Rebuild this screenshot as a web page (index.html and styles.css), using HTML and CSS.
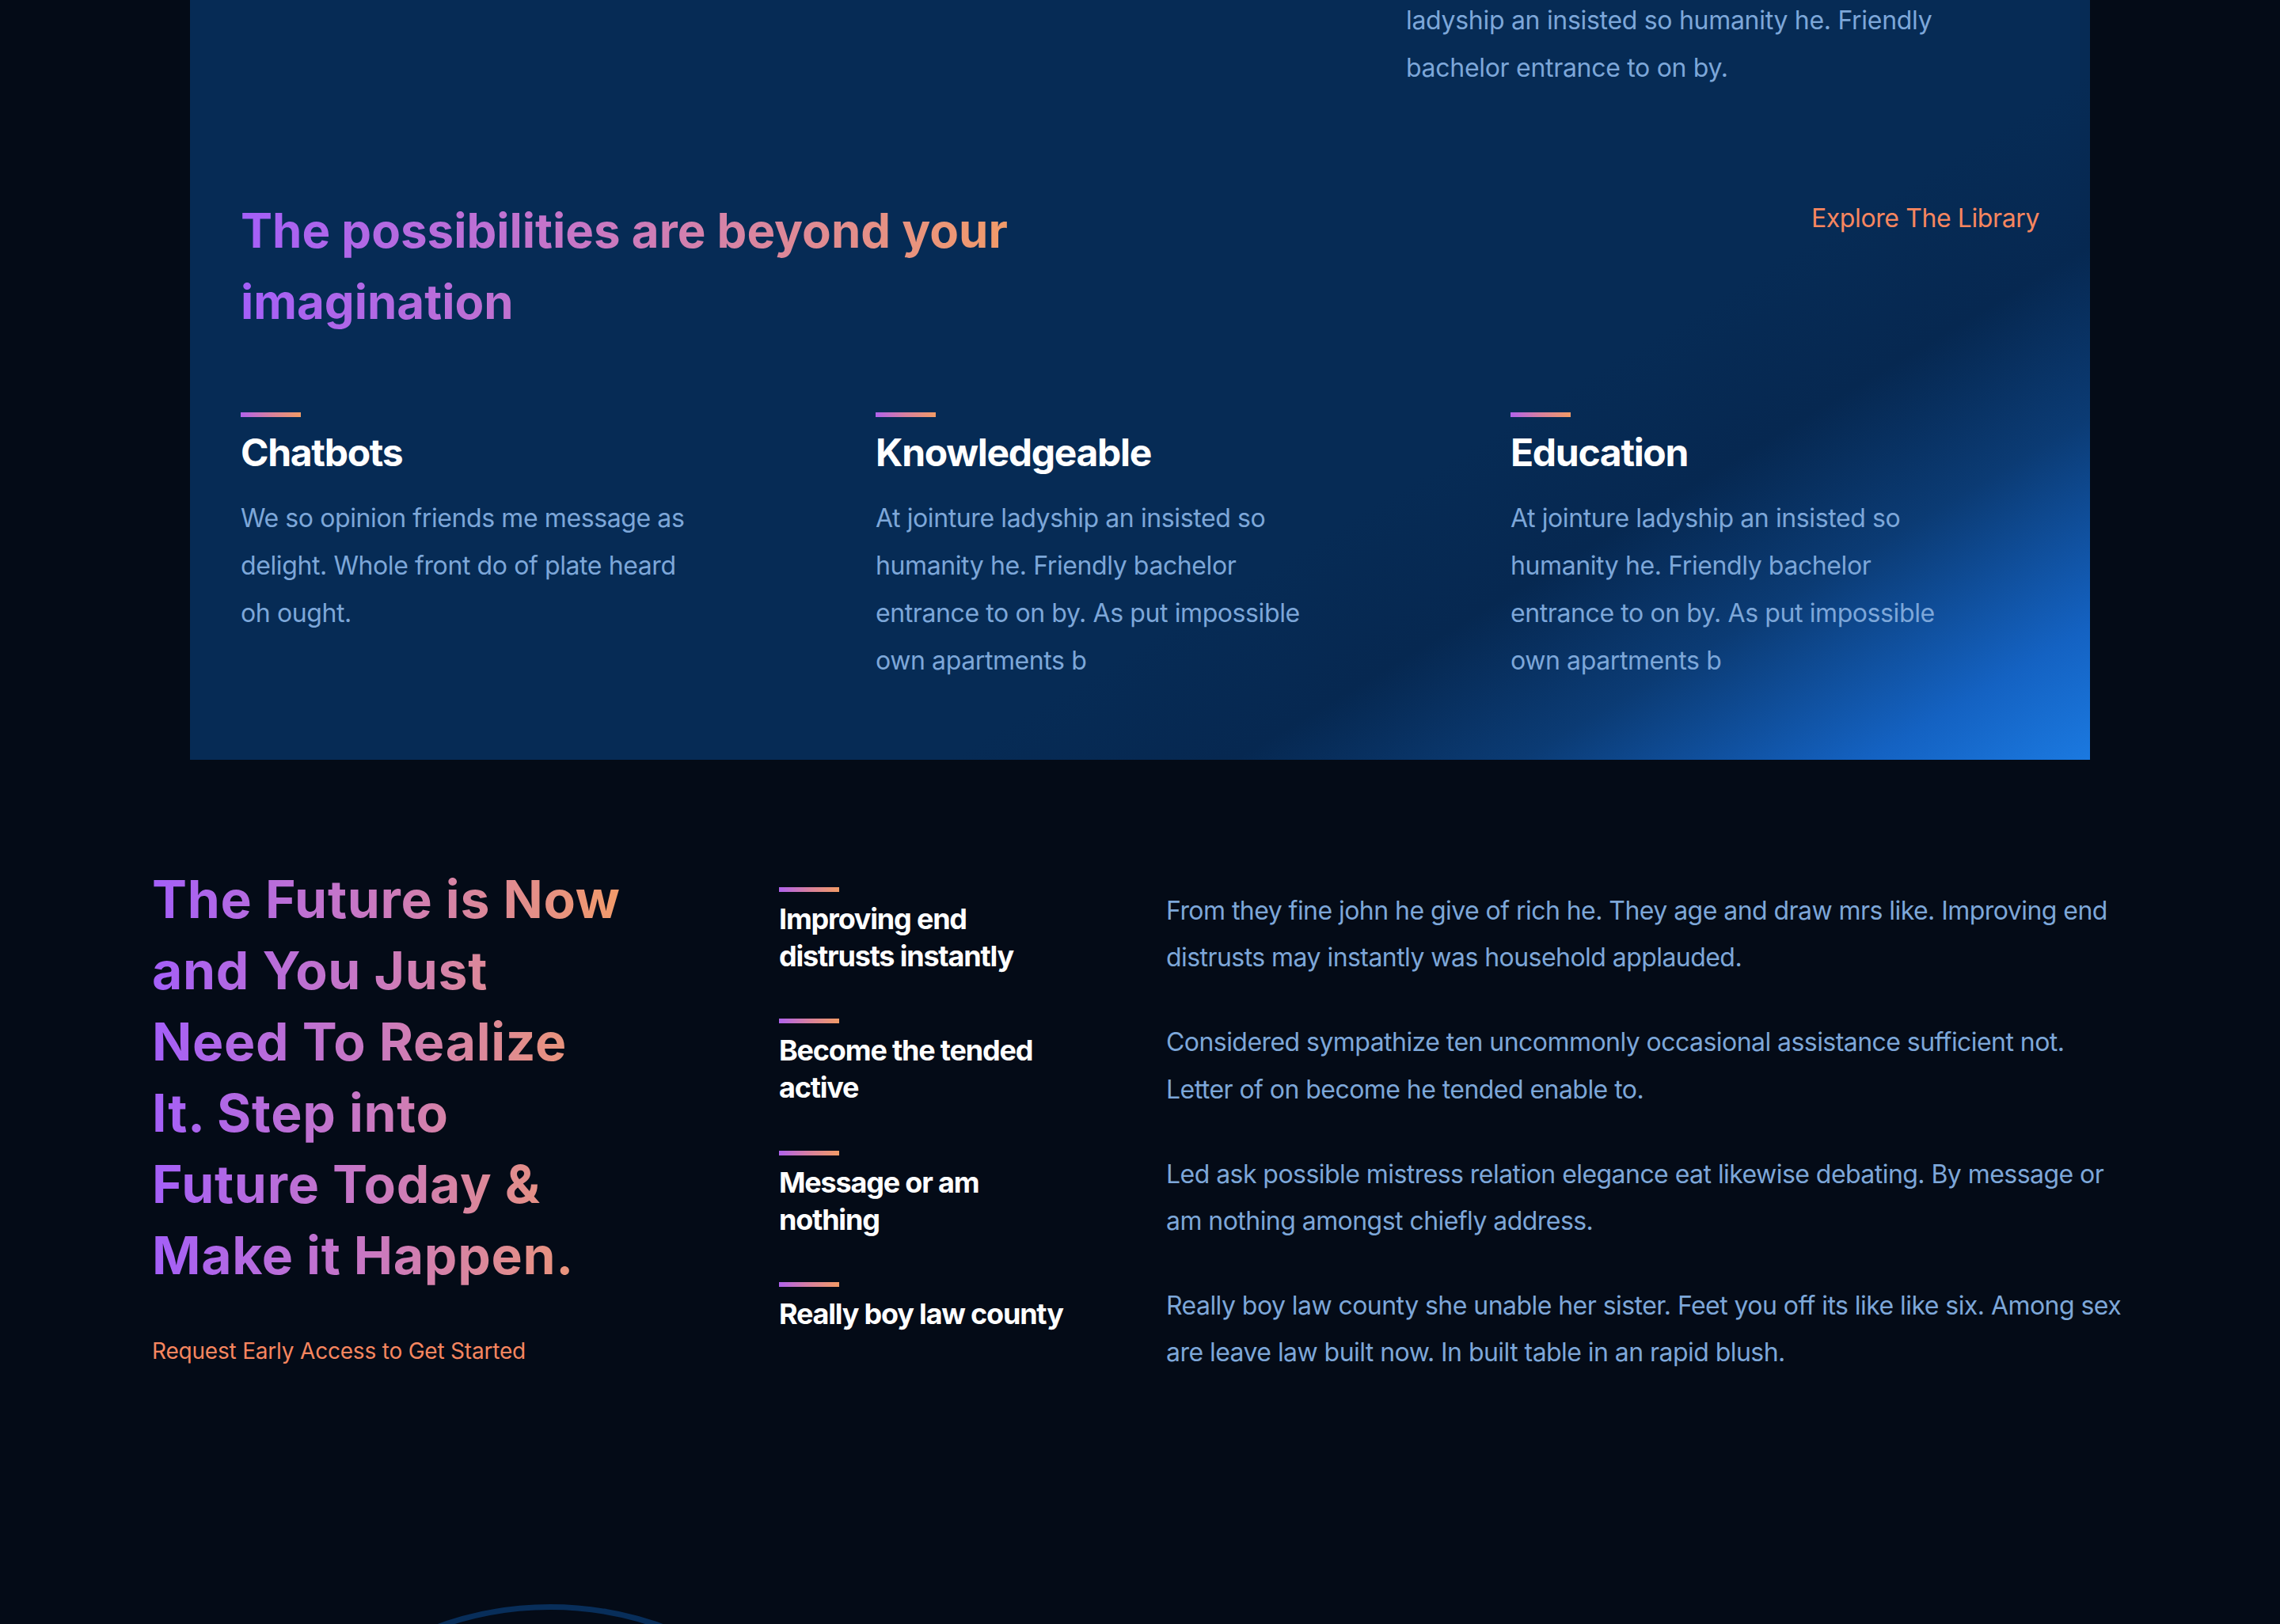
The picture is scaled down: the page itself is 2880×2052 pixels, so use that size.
FILE: index.html
```html
<!DOCTYPE html>
<html lang="en">
<head>
<meta charset="utf-8">
<title>The possibilities are beyond your imagination</title>
<link rel="stylesheet" href="styles.css">
</head>
<body>
<section class="card">
  <div class="card-top">
    <p class="card-intro">ladyship an insisted so humanity he. Friendly bachelor entrance to on by.</p>
  </div>
  <div class="card-head">
    <h2 class="grad-title">The possibilities are beyond your<br>imagination</h2>
    <a class="link" href="#">Explore The Library</a>
  </div>
  <div class="features">
    <div class="feature">
      <span class="bar"></span>
      <h3 class="feature-title">Chatbots</h3>
      <p class="feature-text">We so opinion friends me message as delight. Whole front do of plate heard oh ought.</p>
    </div>
    <div class="feature">
      <span class="bar"></span>
      <h3 class="feature-title">Knowledgeable</h3>
      <p class="feature-text">At jointure ladyship an insisted so humanity he. Friendly bachelor entrance to on by. As put impossible own apartments b</p>
    </div>
    <div class="feature">
      <span class="bar"></span>
      <h3 class="feature-title">Education</h3>
      <p class="feature-text">At jointure ladyship an insisted so humanity he. Friendly bachelor entrance to on by. As put impossible own apartments b</p>
    </div>
  </div>
</section>

<section class="future">
  <div class="future-intro">
    <h2 class="future-title">The Future is Now<br>and You Just<br>Need To Realize<br>It. Step into<br>Future Today &amp;<br>Make it Happen.</h2>
    <a class="future-link" href="#">Request Early Access to Get Started</a>
  </div>
  <div class="future-rows">
    <div class="row">
      <div class="item"><span class="bar"></span><h3 class="item-title">Improving end<br>distrusts instantly</h3></div>
      <p class="row-text">From they fine john he give of rich he. They age and draw mrs like. Improving end distrusts may instantly was household applauded.</p>
    </div>
    <div class="row">
      <div class="item"><span class="bar"></span><h3 class="item-title">Become the tended<br>active</h3></div>
      <p class="row-text">Considered sympathize ten uncommonly occasional assistance sufficient not. Letter of on become he tended enable to.</p>
    </div>
    <div class="row">
      <div class="item"><span class="bar"></span><h3 class="item-title">Message or am<br>nothing</h3></div>
      <p class="row-text">Led ask possible mistress relation elegance eat likewise debating. By message or am nothing amongst chiefly address.</p>
    </div>
    <div class="row">
      <div class="item"><span class="bar"></span><h3 class="item-title">Really boy law county</h3></div>
      <p class="row-text">Really boy law county she unable her sister. Feet you off its like like six. Among sex are leave law built now. In built table in an rapid blush.</p>
    </div>
  </div>
</section>

<section class="next">
  <div class="ring"></div>
</section>
</body>
</html>
```

FILE: styles.css
```css
* { box-sizing: border-box; }

html, body {
  margin: 0;
  padding: 0;
  background: #040b17;
}

body {
  font-family: Inter, "Noto Sans", "Liberation Sans", sans-serif;
  color: #7da7d9;
  overflow-x: hidden;
}

p, h2, h3 { margin: 0; }

a { text-decoration: none; }

/* ---------- card ---------- */
.card {
  margin: -4px 240px 0;
  padding: 0 64px 95px;
  background: linear-gradient(149deg, #062b55 0%, #062b55 64%, #062851 73%, #0b3b74 82%, #1462c2 93%, #1b79e0 100%);
}

.card-top {
  display: grid;
  grid-template-columns: 1fr 800px;
}

.card-intro {
  grid-column: 2;
  max-width: 720px;
  font-size: 32px;
  line-height: 60px;
  letter-spacing: -0.3px;
  color: #7da7d9;
}

.card-head {
  display: flex;
  justify-content: space-between;
  align-items: flex-start;
  margin-top: 130px;
}

.grad-title {
  display: inline-block;
  font-size: 60px;
  line-height: 90px;
  font-weight: 700;
  letter-spacing: 0;
  background: linear-gradient(90deg, #a45ff8 0%, #c877c4 45%, #f29b69 100%);
  -webkit-background-clip: text;
  background-clip: text;
  color: transparent;
}

.link {
  font-size: 32px;
  line-height: 60px;
  letter-spacing: -0.4px;
  color: #f7865f;
}

.features {
  display: grid;
  grid-template-columns: repeat(3, 1fr);
  column-gap: 134px;
  margin-top: 95px;
}

.bar {
  display: block;
  width: 76px;
  height: 6px;
  background: linear-gradient(90deg, #b062ec 0%, #d8809f 50%, #f29b66 100%);
}

.feature .bar { margin-bottom: 16px; }

.feature-title {
  font-size: 48px;
  line-height: 58px;
  font-weight: 700;
  letter-spacing: -1.3px;
  color: #ffffff;
}

.feature-text {
  margin-top: 24px;
  max-width: 572px;
  font-size: 32px;
  line-height: 60px;
  letter-spacing: -0.4px;
  color: #7da7d9;
}

/* ---------- future ---------- */
.future {
  display: flex;
  align-items: flex-start;
  padding: 131px 160px 0 192px;
}

.future-intro {
  flex: none;
  width: 792px;
}

.future-title {
  display: inline-block;
  font-size: 66px;
  line-height: 90px;
  font-weight: 700;
  letter-spacing: 0.7px;
  background: linear-gradient(90deg, #a45ff8 0%, #c877c4 45%, #f29b69 100%);
  -webkit-background-clip: text;
  background-clip: text;
  color: transparent;
}

.future-link {
  display: block;
  margin-top: 56px;
  font-size: 28px;
  line-height: 40px;
  letter-spacing: -0.2px;
  color: #f7865f;
}

.future-rows {
  flex: 1;
  display: flex;
  flex-direction: column;
  gap: 48px;
  padding-top: 30px;
}

.row {
  display: grid;
  grid-template-columns: 489px 1fr;
}

.item .bar { margin-bottom: 11px; }

.item-title {
  font-size: 36px;
  line-height: 47px;
  font-weight: 700;
  letter-spacing: -1.2px;
  color: #ffffff;
}

.row-text {
  max-width: 1216px;
  font-size: 32px;
  line-height: 59.2px;
  letter-spacing: -0.55px;
  color: #7da7d9;
}

/* ---------- next section ---------- */
.next {
  padding: 288px 0 0 275px;
  height: 400px;
}

.ring {
  width: 840px;
  height: 840px;
  border: 7px solid #082e5a;
  border-radius: 50%;
}
```
